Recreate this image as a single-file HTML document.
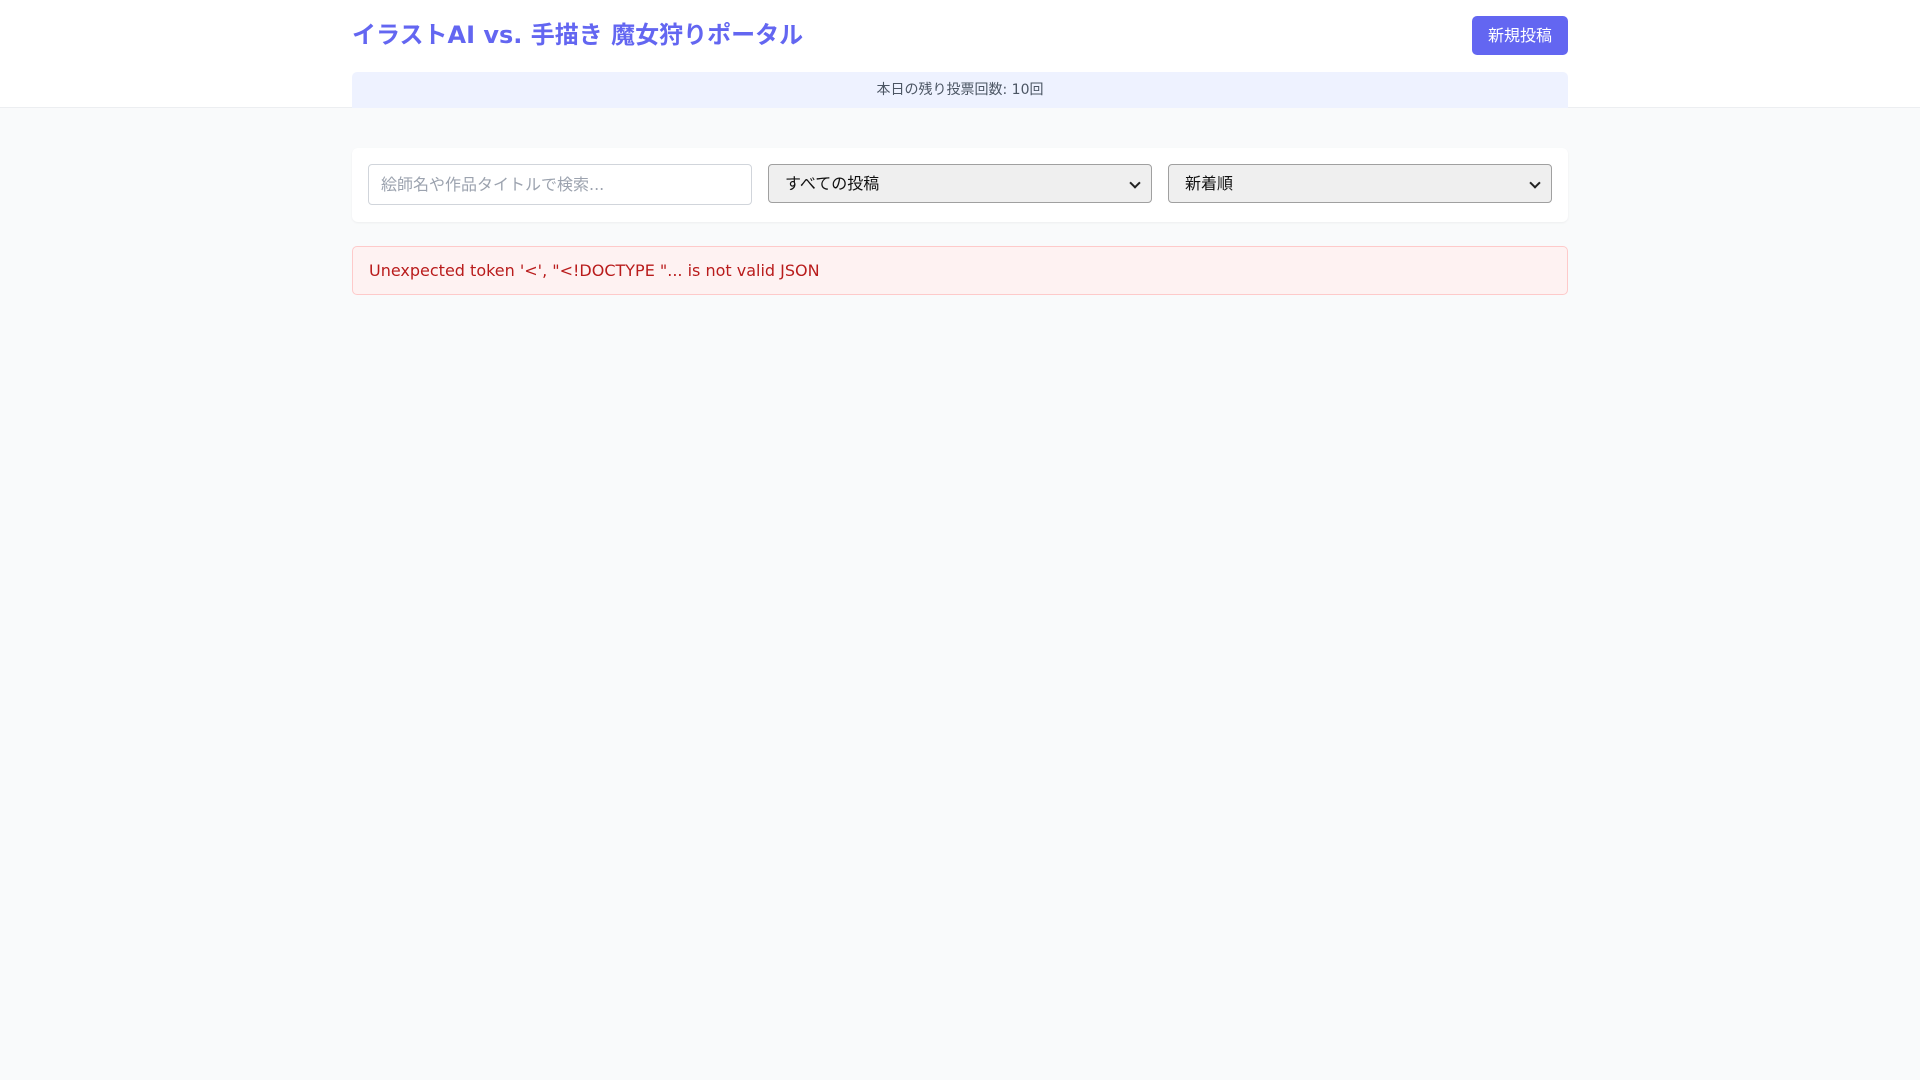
<!DOCTYPE html>
<html><head><meta charset="utf-8"><style>
*{box-sizing:border-box;margin:0;padding:0}
body{width:1920px;height:1080px;background:#f9fafb;font-family:"DejaVu Sans","Noto Sans CJK JP",sans-serif;overflow:hidden}
header{background:#fff;height:108px;border-bottom:1px solid #eceef1;position:relative}
.wrap{position:absolute;left:352px;width:1216px}
h1{position:absolute;left:352px;top:17px;font-size:24px;font-weight:bold;color:#6366f1;line-height:36px}
.btn{position:absolute;left:1472px;top:16px;width:96px;height:39px;background:#6366f1;color:#fff;border-radius:5px;font-size:16px;line-height:39px;text-align:center}
.vote{position:absolute;left:352px;top:72px;width:1216px;height:36px;background:#eef2ff;border-radius:5px 5px 0 0;font-size:14px;color:#4b5563;text-align:center;line-height:36px}
.card{position:absolute;left:352px;top:148px;width:1216px;height:74px;background:#fff;border-radius:6px;box-shadow:0 1px 2px rgba(0,0,0,.05)}
.in{position:absolute;top:16px;width:384px;height:41px;border:1px solid #d1d5db;border-radius:4px;font-size:16px;line-height:39px;padding-left:12px}
.sel{background:#efefef;border-color:#a0a0a0;color:#111;top:16px;height:39px;line-height:37px;padding-left:16px}
.sel:after{content:"";position:absolute;right:12px;top:14px;width:6px;height:6px;border-right:2px solid #222;border-bottom:2px solid #222;transform:rotate(45deg)}
.err{position:absolute;left:352px;top:246px;width:1216px;height:49px;background:#fef2f2;border:1px solid #fecaca;border-radius:5px;color:#b91c1c;font-size:16px;line-height:47px;padding-left:16px}
</style></head><body>
<header>
<h1>イラストAI vs. 手描き 魔女狩りポータル</h1>
<div class="btn">新規投稿</div>
<div class="vote">本日の残り投票回数: 10回</div>
</header>
<div class="card">
<div class="in" style="left:16px;color:#9ca3af">絵師名や作品タイトルで検索...</div>
<div class="in sel" style="left:416px">すべての投稿</div>
<div class="in sel" style="left:816px">新着順</div>
</div>
<div class="err">Unexpected token '&lt;', "&lt;!DOCTYPE "... is not valid JSON</div>
</body></html>
